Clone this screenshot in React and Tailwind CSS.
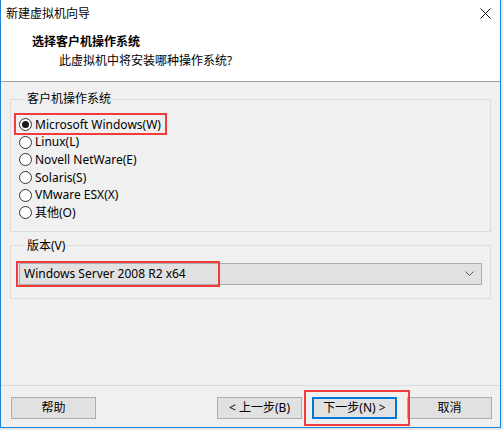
const FONT = { fontFamily: '"Noto Sans", "Noto Sans CJK SC", sans-serif' };

const systems = [
  { label: "Microsoft Windows(W)", checked: true },
  { label: "Linux(L)" },
  { label: "Novell NetWare(E)" },
  { label: "Solaris(S)" },
  { label: "VMware ESX(X)" },
  { label: "其他(O)" },
];

function Radio({ label, checked }) {
  return (
    <div className="relative flex h-[17.6px] items-center gap-[3px]">
      <span className="flex h-[13px] w-[13px] items-center justify-center rounded-full border border-[#333] bg-white">
        {checked && <span className="h-[7px] w-[7px] rounded-full bg-[#1a1a1a]" />}
      </span>
      <span className="text-[12px] leading-[16px] text-black">{label}</span>
      {checked && (
        <span className="pointer-events-none absolute left-[-5px] top-[-3px] h-[22px] w-[153px] border-2 border-[#f23c3c]" />
      )}
    </div>
  );
}

function Button({ children, primary }) {
  return (
    <button
      className={`flex h-[22px] w-[85px] items-center justify-center bg-[#e1e1e1] text-[12px] leading-[16px] text-black ${
        primary ? "border-2 border-[#0078d7]" : "border border-[#adadad]"
      }`}
    >
      {children}
    </button>
  );
}

export default function App() {
  return (
    <div className="h-[430px] w-[503px] overflow-hidden bg-[#e4e6e8]" style={FONT}>
      <div className="flex h-[428px] w-[501px] flex-col border-x border-b border-[#1883d7] bg-[#f0f0f0]">
        {/* Title bar */}
        <div className="flex h-[27px] items-center justify-between bg-white pl-[5px] pr-[9px]">
          <span className="text-[12px] leading-[16px] text-black">新建虚拟机向导</span>
          <svg width="11" height="11" viewBox="0 0 11 11" className="mt-[-1px]">
            <path d="M0.5 0.5 L10.5 10.5 M10.5 0.5 L0.5 10.5" stroke="#111" strokeWidth="1" />
          </svg>
        </div>

        {/* Header */}
        <div className="h-[55px] border-b border-[#a0a0a0] bg-white pl-[31px] pt-[7px]">
          <div className="text-[12px] font-bold leading-[16px] text-black">选择客户机操作系统</div>
          <div className="mt-[3px] pl-[27px] text-[12px] leading-[16px] text-black">此虚拟机中将安装哪种操作系统?</div>
        </div>

        {/* Body */}
        <div className="flex flex-1 flex-col px-[9px] pt-[9px]">
          <fieldset className="border border-[#dcdcdc] pb-[9px] pl-[8px] pt-[9px]">
            <legend className="ml-[6px] px-[2px] text-[12px] leading-[16px] text-black">客户机操作系统</legend>
            {systems.map((s) => (
              <Radio key={s.label} label={s.label} checked={s.checked} />
            ))}
          </fieldset>

          <fieldset className="mt-[6px] border border-[#dcdcdc] px-[8px] pb-[13px] pt-[9px]">
            <legend className="ml-[6px] px-[2px] text-[12px] leading-[16px] text-black">版本(V)</legend>
            <div className="relative flex h-[22px] items-center justify-between border border-[#adadad] bg-[#e1e1e1] pl-[4px] pr-[7px]">
              <span className="text-[12px] leading-[16px] text-black">Windows Server 2008 R2 x64</span>
              <svg width="9" height="5" viewBox="0 0 9 5">
                <path d="M0.5 0.5 L4.5 4.5 L8.5 0.5" fill="none" stroke="#555" strokeWidth="1" />
              </svg>
              <span className="pointer-events-none absolute left-[-4px] top-[-3px] h-[26px] w-[204px] border-2 border-[#f23c3c]" />
            </div>
          </fieldset>
        </div>

        {/* Footer */}
        <div className="flex items-center border-t border-[#dadada] pb-[8px] pl-[10px] pr-[8px] pt-[11px]">
          <Button>帮助</Button>
          <div className="ml-auto flex items-center gap-[10px]">
            <Button>&lt; 上一步(B)</Button>
            <div className="relative">
              <Button primary>下一步(N) &gt;</Button>
              <span className="pointer-events-none absolute left-[-8px] top-[-7px] h-[36px] w-[106px] border-2 border-[#f23c3c]" />
            </div>
            <Button>取消</Button>
          </div>
        </div>
      </div>
    </div>
  );
}
